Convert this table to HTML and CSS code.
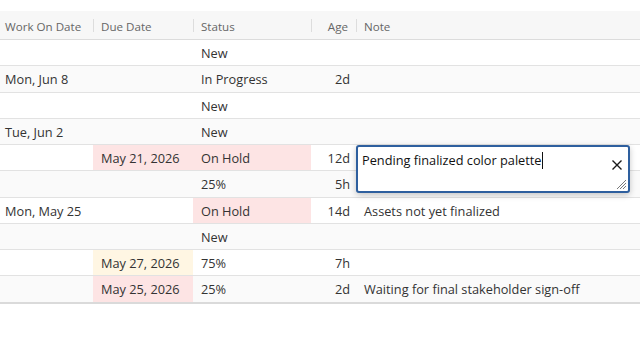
FILE: index.html
```html
<!DOCTYPE html>
<html>
<head>
<meta charset="utf-8">
<link rel="stylesheet" href="styles.css">
</head>
<body>
<div class="grid">
  <div class="row head">
    <div class="c c1">Work On Date</div>
    <div class="c c2 sep">Due Date</div>
    <div class="c c3 sep">Status</div>
    <div class="c c4 sep">Age</div>
    <div class="c c5 sep">Note</div>
  </div>
  <div class="row"><div class="c c1"></div><div class="c c2"></div><div class="c c3">New</div><div class="c c4"></div><div class="c c5"></div></div>
  <div class="row alt"><div class="c c1">Mon, Jun 8</div><div class="c c2"></div><div class="c c3">In Progress</div><div class="c c4">2d</div><div class="c c5"></div></div>
  <div class="row"><div class="c c1"></div><div class="c c2"></div><div class="c c3">New</div><div class="c c4"></div><div class="c c5"></div></div>
  <div class="row alt"><div class="c c1">Tue, Jun 2</div><div class="c c2"></div><div class="c c3">New</div><div class="c c4"></div><div class="c c5"></div></div>
  <div class="row editing"><div class="c c1"></div><div class="c c2 red">May 21, 2026</div><div class="c c3 red">On Hold</div><div class="c c4">12d</div><div class="c c5"></div>
    <div class="editor">
      <span class="etext">Pending finalized color palette</span><span class="caret"></span>
      <svg class="close" width="12" height="12" viewBox="0 0 12 12"><path d="M1.5 1.5 L10.5 10.5 M10.5 1.5 L1.5 10.5" stroke="#1a1a1a" stroke-width="1.4" fill="none"/></svg>
      <svg class="grip" width="12" height="12" viewBox="0 0 12 12"><path d="M11 2 L2 11 M11 5 L5 11 M11 8 L8 11" stroke="#7a7a7a" stroke-width="1" fill="none"/></svg>
    </div>
  </div>
  <div class="row alt"><div class="c c1"></div><div class="c c2"></div><div class="c c3">25%</div><div class="c c4">5h</div><div class="c c5"></div></div>
  <div class="row"><div class="c c1">Mon, May 25</div><div class="c c2"></div><div class="c c3 red">On Hold</div><div class="c c4">14d</div><div class="c c5">Assets not yet finalized</div></div>
  <div class="row alt"><div class="c c1"></div><div class="c c2"></div><div class="c c3">New</div><div class="c c4"></div><div class="c c5"></div></div>
  <div class="row"><div class="c c1"></div><div class="c c2 amber">May 27, 2026</div><div class="c c3">75%</div><div class="c c4">7h</div><div class="c c5"></div></div>
  <div class="row alt last"><div class="c c1"></div><div class="c c2 red">May 25, 2026</div><div class="c c3">25%</div><div class="c c4">2d</div><div class="c c5">Waiting for final stakeholder sign-off</div></div>
</div>
</body>
</html>
```
FILE: styles.css
```css
html, body {
  margin: 0;
  padding: 0;
  background: #fff;
}
body {
  font-family: "Open Sans", "Liberation Sans", sans-serif;
  font-size: 12.75px;
  color: #333;
  width: 640px;
  height: 360px;
  overflow: hidden;
}
.grid {
  padding-top: 11px;
}
.row {
  display: grid;
  grid-template-columns: 93px 100px 118px 45px 1fr;
  height: 26.25px;
  box-sizing: border-box;
  border-bottom: 1px solid #e2e2e2;
  position: relative;
}
.row.alt {
  background: #fafafa;
}
.row.last {
  height: 27.25px;
  border-bottom: 2px solid #dadada;
}
.row.head {
  height: 29px;
  background: #f7f7f7;
  border-bottom: 1px solid #dcdcdc;
  color: #666;
  font-size: 11.6px;
}
.c {
  display: flex;
  align-items: center;
  padding: 1px 8px 0;
  white-space: nowrap;
  overflow: hidden;
  position: relative;
}
.head .c { padding-top: 2px; }
.c1 { padding-left: 5px; }
.c4 { justify-content: flex-end; padding-right: 6px; }
.head .c4 { padding-right: 8px; }
.head .sep::before {
  content: "";
  position: absolute;
  left: 0;
  top: 8px;
  bottom: 7px;
  width: 1px;
  background: #dddddd;
}
.red { background: #fde4e4; }
.amber { background: #fff6e3; }
.editor {
  position: absolute;
  left: 356px;
  top: 0;
  width: 274px;
  height: 48px;
  box-sizing: border-box;
  border: 2px solid #2e5f9e;
  border-radius: 3px;
  background: #fff;
  box-shadow: 0 2px 6px rgba(0, 0, 0, 0.22);
  padding: 4px 4px;
  color: #111;
  z-index: 2;
}
.etext {
  line-height: 18px;
}
.caret {
  display: inline-block;
  width: 1px;
  height: 17px;
  background: #111;
  vertical-align: -4px;
}
.close {
  position: absolute;
  right: 5px;
  top: 12px;
}
.grip {
  position: absolute;
  right: 1px;
  bottom: 1px;
}
```
